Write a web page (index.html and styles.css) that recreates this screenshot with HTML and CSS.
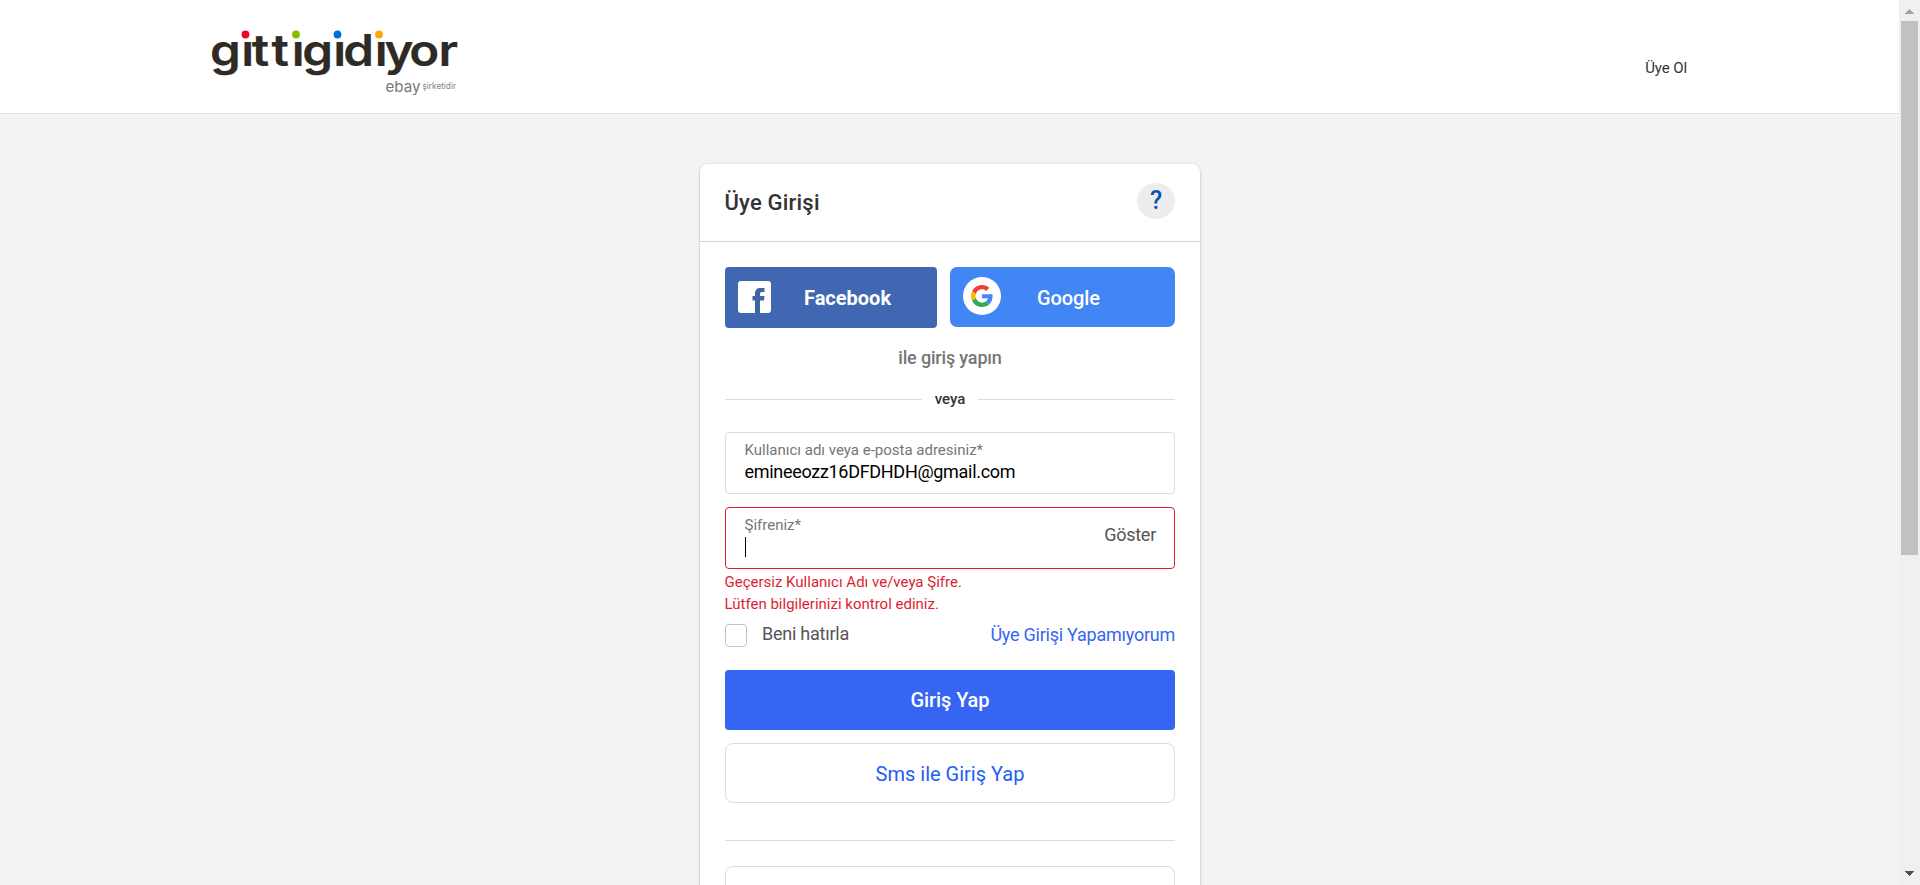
FILE: index.html
```html
<!DOCTYPE html>
<html lang="tr">
<head>
<meta charset="utf-8">
<title>Üye Girişi</title>
<link rel="stylesheet" href="styles.css">
</head>
<body>
<div class="window">
  <div class="page">
    <header class="topbar">
      <svg class="logo" width="250" height="72" viewBox="0 0 250 72" role="img" aria-label="gittigidiyor">
        <text class="logo-word" transform="scale(1.12 1)" y="38" x="-0.9 27.1 36.4 54 72.2 81.500 109.2 118.1 146.300 155 177.100 203.200">gıttıgıdıyor</text>
        <circle cx="34.5" cy="6.5" r="3.9" fill="#f0002d"/>
        <circle cx="85" cy="6.5" r="3.9" fill="#86bc00"/>
        <circle cx="126.5" cy="6.5" r="3.9" fill="#0072d6"/>
        <circle cx="168" cy="6.5" r="3.9" fill="#fca800"/>
        <text class="logo-ebay" x="174.500" y="64" textLength="35" lengthAdjust="spacingAndGlyphs">ebay</text>
        <text class="logo-sub" x="211.500" y="60.700" textLength="33.500" lengthAdjust="spacingAndGlyphs">şirketidir</text>
      </svg>
      <a class="signup">Üye Ol</a>
    </header>
    <main class="content">
      <section class="card">
        <div class="card-head">
          <h1 class="title">Üye Girişi</h1>
          <span class="help">?</span>
        </div>
        <div class="card-body">
          <div class="social">
            <a class="btn-facebook">
              <svg width="33" height="32" viewBox="0 0 33 32"><rect width="33" height="32" rx="3" fill="#fff"/><path d="M17 32V19.500H14.500V15H17V12.500C17 9 19 7 22.500 7H26.500V11H24C22.500 11 22 11.700 22 13V15H26.500L26 19.500H22V32Z" fill="#3f66a0"/></svg>
              <span class="social-name">Facebook</span>
            </a>
            <a class="btn-google">
              <span class="g-disc"><svg width="22" height="22" viewBox="0 0 48 48"><path fill="#EA4335" d="M24 9.500c3.540 0 6.710 1.220 9.210 3.600l6.850-6.850C35.900 2.380 30.470 0 24 0 14.620 0 6.510 5.380 2.560 13.220l7.980 6.190C12.430 13.720 17.740 9.500 24 9.500z"/><path fill="#4285F4" d="M46.980 24.550c0-1.570-.15-3.090-.38-4.550H24v9.020h12.940c-.58 2.960-2.260 5.480-4.780 7.180l7.730 6c4.510-4.180 7.090-10.360 7.090-17.650z"/><path fill="#FBBC05" d="M10.530 28.590c-.48-1.450-.76-2.990-.76-4.590s.27-3.140.76-4.590l-7.980-6.190C.92 16.460 0 20.120 0 24c0 3.880.92 7.540 2.560 10.780l7.970-6.190z"/><path fill="#34A853" d="M24 48c6.480 0 11.930-2.130 15.890-5.810l-7.730-6c-2.150 1.450-4.920 2.300-8.160 2.300-6.260 0-11.570-4.220-13.470-9.910l-7.980 6.190C6.510 42.620 14.620 48 24 48z"/></svg></span>
              <span class="social-name">Google</span>
            </a>
          </div>
          <p class="with">ile giriş yapın</p>
          <div class="or"><span>veya</span></div>
          <div class="field">
            <div class="field-main"><span class="label">Kullanıcı adı veya e-posta adresiniz*</span><span class="value">emineeozz16DFDHDH@gmail.com</span></div>
          </div>
          <div class="field field-error">
            <div class="field-main"><span class="label">Şifreniz*</span><i class="caret"></i></div>
            <span class="show">Göster</span>
          </div>
          <p class="error">Geçersiz Kullanıcı Adı ve/veya Şifre.<br>Lütfen bilgilerinizi kontrol ediniz.</p>
          <div class="options">
            <span class="check"></span>
            <span class="remember">Beni hatırla</span>
            <a class="trouble">Üye Girişi Yapamıyorum</a>
          </div>
          <a class="btn-login">Giriş Yap</a>
          <a class="btn-outline">Sms ile Giriş Yap</a>
          <div class="divider"></div>
          <a class="btn-outline"></a>
        </div>
      </section>
    </main>
  </div>
  <div class="scrollbar">
    <svg class="arrow" width="9" height="5" viewBox="0 0 9 5"><path d="M4 0h1v1h1v1h1v1h1v1h1v1H0V4h1V3h1V2h1V1h1z" fill="#a3a3a3"/></svg>
    <div class="thumb"></div>
    <svg class="arrow" width="9" height="5" viewBox="0 0 9 5"><path d="M0 0h9v1H8v1H7v1H6v1H5v1H4V4H3V3H2V2H1V1H0z" fill="#505050"/></svg>
  </div>
</div>
</body>
</html>
```
FILE: styles.css
```css
* { box-sizing: border-box; }
body { margin: 0; font-family: Roboto, "Liberation Sans", sans-serif; color: #333; }
h1, p { margin: 0; }
.window { display: flex; height: 885px; overflow: hidden; }
.page { flex: 1; height: 885px; overflow: hidden; background: #f3f3f3; }
.topbar { display: flex; justify-content: space-between; height: 114px; padding: 28px 212px 0 211px; background: #fff; border-bottom: 1px solid #e0e0e0; }
.logo { overflow: visible; }
.logo-word { font: 600 44px Inter, sans-serif; fill: #2e2a25; stroke: #2e2a25; stroke-width: .2px; }
.logo-ebay { font: 400 15px Inter, sans-serif; fill: #77787b; }
.logo-sub { font: 400 9px Inter, sans-serif; fill: #808184; }
.signup { margin-top: 30px; font-size: 15px; line-height: 20px; letter-spacing: -.1px; }
.content { display: flex; justify-content: center; padding: 50px 0 0 1px; }
.card { width: 500px; height: 900px; background: #fff; border-radius: 8px; box-shadow: 0 1px 3px rgba(0, 0, 0, .28); }
.card-head { display: flex; justify-content: space-between; height: 78px; padding: 19px 25px 0; border-bottom: 1px solid #d5d5d5; }
.title { margin-left: -.5px; font-size: 22px; line-height: 40px; font-weight: 500; letter-spacing: .2px; }
.help { width: 38px; height: 36px; border-radius: 50%; background: #ededed; color: #0654ba; font-size: 25px; font-weight: 500; line-height: 35px; text-align: center; }
.card-body { display: flex; flex-direction: column; padding: 25px 25px 0; }
.social { display: flex; align-items: flex-start; gap: 13px; color: #fff; font-size: 20px; line-height: 24px; }
.btn-facebook { display: flex; width: 212px; height: 61px; padding: 14px 13px; border-radius: 4px; background: #4267b2; }
.btn-google { display: flex; width: 225px; height: 60px; padding: 10px 13px; border-radius: 7px; background: #4285f4; }
.btn-facebook .social-name { margin: 5px 0 0 33px; font-weight: 700; }
.btn-google .social-name { margin: 9px 0 0 36px; font-weight: 500; letter-spacing: -.1px; }
.g-disc { display: flex; align-items: center; justify-content: center; width: 38px; height: 38px; border-radius: 50%; background: #fff; }
.with { margin-top: 18px; text-align: center; font-size: 18px; line-height: 24px; font-weight: 500; letter-spacing: -.17px; color: #767676; }
.or { display: flex; align-items: center; gap: 12.5px; margin-top: 19px; font-size: 15px; line-height: 20px; font-weight: 500; }
.or::before, .or::after { content: ""; flex: 1; height: 1px; background: #dcdcdc; }
.field { display: flex; justify-content: space-between; height: 62px; margin-top: 23px; padding: 7px 18px 0 19px; border: 1px solid #dcdcdc; border-radius: 4px; }
.field-main { display: flex; flex-direction: column; margin-left: -.5px; }
.label { font-size: 15px; line-height: 20px; color: #767676; }
.value { margin-top: 1px; font-size: 18px; line-height: 22px; letter-spacing: -.3px; color: #000; }
.field-error { margin-top: 13px; border-color: #dd1e31; }
.caret { width: 1px; height: 20px; margin: 2px 0 0 .5px; background: #000; }
.show { margin-top: 9px; font-size: 18px; line-height: 22px; letter-spacing: -.25px; color: #555; }
.error { margin: 2px 0 0 -.5px; font-size: 15px; line-height: 22px; color: #dd1e31; }
.options { display: flex; height: 23px; margin-top: 9px; font-size: 18px; line-height: 22px; letter-spacing: -.24px; }
.check { width: 22px; height: 23px; border: 1px solid #c4c4c4; border-radius: 4px; }
.remember { margin: -1px 0 0 15px; color: #555; }
.trouble { margin-left: auto; color: #3665f3; }
.btn-login, .btn-outline { height: 60px; line-height: 60px; font-size: 20px; text-align: center; }
.btn-login { margin-top: 23px; border-radius: 4px; background: #3665f3; color: #fff; font-weight: 500; letter-spacing: -.1px; }
.btn-outline { margin-top: 13px; border: 1px solid #dcdcdc; border-radius: 8px; color: #1f5ef7; }
.divider { height: 1px; margin: 37px 0 12px; background: #dcdcdc; }
.scrollbar { display: flex; flex-direction: column; align-items: center; width: 21px; height: 885px; padding: 9px 0; background: #f0f0f0; }
.arrow { flex: none; }
.thumb { width: 17px; height: 534px; margin: 7px 0 auto; background: #c1c1c1; }
```
